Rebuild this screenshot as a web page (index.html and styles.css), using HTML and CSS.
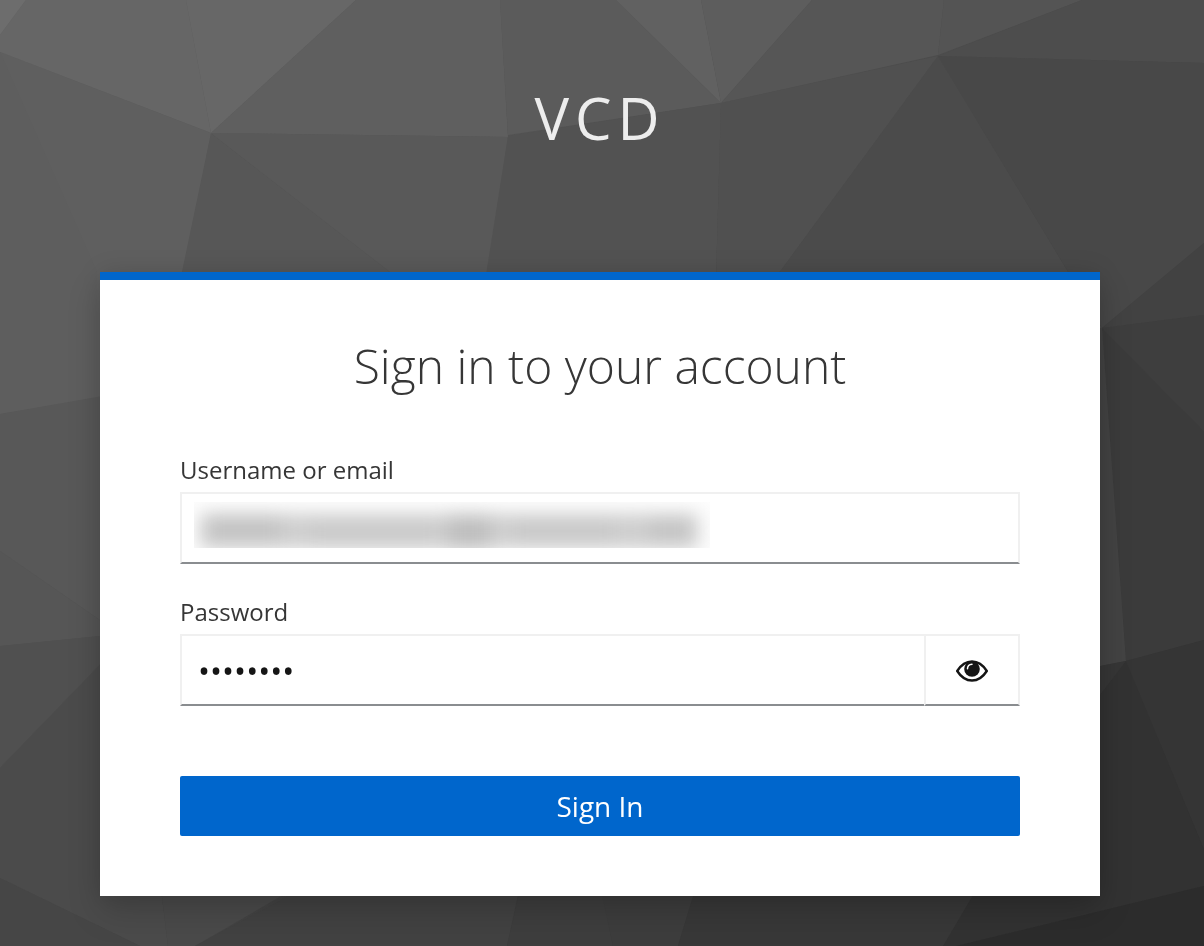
FILE: index.html
```html
<!DOCTYPE html>
<html lang="en">
<head>
<meta charset="utf-8">
<meta name="viewport" content="width=device-width, initial-scale=1">
<title>Sign in to VCD</title>
<link rel="stylesheet" href="styles.css">
</head>
<body>
<svg class="backdrop" viewBox="0 0 1204 946" preserveAspectRatio="none" aria-hidden="true">
  <defs>
    <linearGradient id="base" x1="0" y1="0" x2="1" y2="1"><stop offset="0" stop-color="#626262"/><stop offset="1" stop-color="#2e2e2e"/></linearGradient>
  </defs>
  <rect width="1204" height="946" fill="url(#base)"/>
  <path fill="#6d6d6d" d="M0 0H26L0 35Z"/>
  <path fill="#666" d="M26 0H186L211 133L0 52V35Z"/>
  <path fill="#676767" d="M186 0H356L211 133Z"/>
  <path fill="#5f5f5f" d="M356 0H500L508 137L211 133Z"/>
  <path fill="#5b5b5b" d="M500 0H616L721 103L508 135Z"/>
  <path fill="#616161" d="M616 0H701L721 103Z"/>
  <path fill="#5d5d5d" d="M701 0H812L721 103Z"/>
  <path fill="#565656" d="M812 0H944L938 55L721 103Z"/>
  <path fill="#545454" d="M944 0H1082L938 55Z"/>
  <path fill="#4d4d4d" d="M1082 0H1204V63L938 56Z"/>
  <path fill="#5f5f5f" d="M0 52L211 133L162 387L0 414Z"/>
  <path fill="#5e5e5e" d="M0 52L97 272V398L0 414Z"/>
  <path fill="#575757" d="M211 133L390 272V420H151Z"/>
  <path fill="#595959" d="M211 133L508 137L470 400L390 272Z"/>
  <path fill="#525252" d="M508 136L721 103L712 420H463Z"/>
  <path fill="#505050" d="M721 103L938 56L642 460H711Z"/>
  <path fill="#4b4b4b" d="M938 56L1102 328V460H642Z"/>
  <path fill="#484848" d="M938 56L1204 63V243L1102 328Z"/>
  <path fill="#424242" d="M1204 243V315L1102 328Z"/>
  <path fill="#3e3e3e" d="M1102 328L1204 315V432Z"/>
  <path fill="#3b3b3b" d="M1102 328L1204 432V640L1126 661Z"/>
  <path fill="#434343" d="M1090 328H1102L1126 661L1090 668Z"/>
  <path fill="#363636" d="M1090 668L1126 661L1090 708Z"/>
  <path fill="#353535" d="M1126 661L1204 640V850Z"/>
  <path fill="#323232" d="M1126 661L1204 850V886L956 946H943L980 870L1090 708Z"/>
  <path fill="#585858" d="M0 414L120 393V634L0 551Z"/>
  <path fill="#565656" d="M0 551L120 634L0 646Z"/>
  <path fill="#505050" d="M0 646L120 634V644L0 768Z"/>
  <path fill="#4b4b4b" d="M0 768L120 644L160 880L168 946H140L0 878Z"/>
  <path fill="#464646" d="M0 878L140 946H0Z"/>
  <path fill="#4a4a4a" d="M160 880H309L195 946H168Z"/>
  <path fill="#424242" d="M309 885H520L507 946H195Z"/>
  <path fill="#3e3e3e" d="M520 890H602L613 946H507Z"/>
  <path fill="#3d3d3d" d="M601 890H695L678 946H613Z"/>
  <path fill="#383838" d="M695 890H976L943 946H678Z"/>
  <path fill="#2c2c2c" d="M956 946L1204 886V946Z"/>
</svg>
<div class="page">
  <header class="brand">VCD</header>
  <main class="card">
    <h1 class="title">Sign in to your account</h1>
    <form class="form">
      <div class="field">
        <label class="label" for="username">Username or email</label>
        <div class="control">
          <input class="input" id="username" type="text" autocomplete="username">
          <svg class="redaction" viewBox="0 0 516 46" aria-hidden="true">
            <defs><filter id="soft" x="-20%" y="-100%" width="140%" height="300%" color-interpolation-filters="sRGB"><feGaussianBlur stdDeviation="9"/></filter></defs>
            <rect width="516" height="46" fill="#fdfdfd"/>
            <g filter="url(#soft)" fill="#888">
              <rect x="6" y="12" width="498" height="34" opacity=".4"/>
              <rect x="14" y="12" width="72" height="28" opacity=".16"/>
              <rect x="118" y="20" width="125" height="28" opacity=".07"/>
              <rect x="254" y="12" width="42" height="38" opacity=".24"/>
              <rect x="320" y="19" width="100" height="20" opacity=".08"/>
              <rect x="455" y="16" width="42" height="24" opacity=".14"/>
            </g>
          </svg>
        </div>
      </div>
      <div class="field">
        <label class="label" for="password">Password</label>
        <div class="control">
          <input class="input" id="password" type="password" value="password" autocomplete="current-password">
          <button class="reveal" type="button" aria-label="Show password">
            <svg class="eye" viewBox="0 0 32 22" aria-hidden="true">
              <path d="M1.200 11C5 5 10 1.500 16 1.500S27 5 30.800 11C27 17 22 20.500 16 20.500S5 17 1.200 11Z" fill="#fff" stroke="#151515" stroke-width="2.400" stroke-linejoin="round"/>
              <circle cx="16" cy="9" r="7.800" fill="#151515"/>
              <path d="M11.500 8.800C11.500 6 13.300 4.400 16 4.200" fill="none" stroke="#fff" stroke-width="1.500" stroke-linecap="round"/>
            </svg>
          </button>
        </div>
      </div>
      <button class="submit" type="submit">Sign In</button>
    </form>
  </main>
</div>
</body>
</html>
```
FILE: styles.css
```css
* { box-sizing: border-box; }
body {
  margin: 0;
  min-height: 100vh;
  background: #444;
  color: #363636;
  font-family: "Open Sans", "Noto Sans", sans-serif;
}
.backdrop {
  position: fixed;
  inset: 0;
  z-index: -1;
  width: 100%;
  height: 100%;
}
.page {
  display: flex;
  flex-direction: column;
  padding: 78px 104px 48px 100px;
}
.brand {
  padding-bottom: 114px;
  color: #ededed;
  font-size: 58px;
  line-height: 80px;
  letter-spacing: 6px;
  text-align: center;
}
.card {
  padding: 56px 80px 60px;
  border-top: 8px solid #06c;
  background: #fff;
  box-shadow: 0 16px 32px rgba(3, 3, 3, .16), 0 0 24px rgba(3, 3, 3, .1);
}
.title {
  margin: 0 0 58px;
  font-size: 48px;
  font-weight: 300;
  line-height: 60px;
  text-align: center;
}
.form {
  display: flex;
  flex-direction: column;
}
.field { margin-bottom: 32px; }
.label {
  display: block;
  margin-bottom: 6px;
  font-size: 24px;
  line-height: 32px;
}
.control {
  position: relative;
  display: flex;
}
.input, .reveal {
  height: 72px;
  border: 2px solid #f0f0f0;
  border-bottom-color: #8a8d90;
  border-radius: 0;
  background: #fff;
  color: #151515;
}
.input {
  flex: 1;
  min-width: 0;
  padding: 0 16px;
  font: 32px "Open Sans", sans-serif;
}
.redaction {
  position: absolute;
  top: 10px;
  left: 14px;
  width: 516px;
  height: 46px;
  overflow: hidden;
  pointer-events: none;
}
.reveal {
  display: flex;
  align-items: center;
  justify-content: center;
  width: 96px;
  margin-left: -2px;
  padding: 2px 0 0;
}
.eye { width: 32px; height: 22px; }
.submit {
  height: 60px;
  margin-top: 38px;
  border: 0;
  border-radius: 2px;
  background: #06c;
  color: #fff;
  font: 28px "Open Sans", sans-serif;
}
```
